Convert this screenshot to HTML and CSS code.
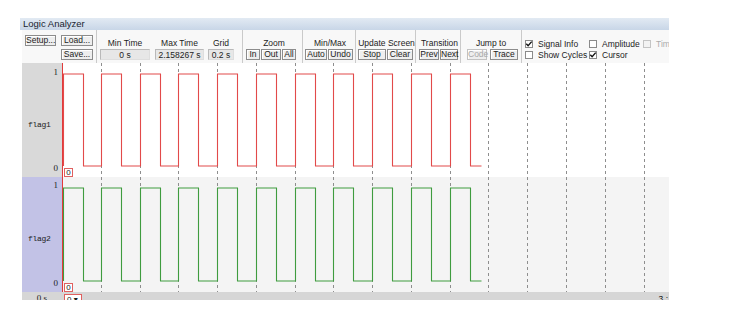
FILE: index.html
```html
<!DOCTYPE html>
<html lang="en">
<head>
    <meta charset="UTF-8">
    <title>Logic Analyzer</title>
    <link rel="stylesheet" href="styles.css">
</head>
<body>
<div class="window">
    <div class="titlebar">Logic Analyzer</div>
    <div class="frame">
        <div class="toolbar">
            <div class="grp grp-file">
                <button class="btn b-setup">Setup...</button>
                <button class="btn b-load">Load...</button>
                <button class="btn b-save">Save...</button>
            </div>
            <div class="grp grp-times">
                <div class="field f-min">
                    <span class="lbl">Min Time</span>
                    <span class="val">0 s</span>
                </div>
                <div class="field f-max">
                    <span class="lbl">Max Time</span>
                    <span class="val">2.158267 s</span>
                </div>
                <div class="field f-grid">
                    <span class="lbl">Grid</span>
                    <span class="val">0.2 s</span>
                </div>
            </div>
            <div class="grp grp-zoom">
                <span class="lbl">Zoom</span>
                <div class="btns">
                    <button class="btn w14">In</button>
                    <button class="btn w20">Out</button>
                    <button class="btn w14">All</button>
                </div>
            </div>
            <div class="grp grp-minmax">
                <span class="lbl">Min/Max</span>
                <div class="btns">
                    <button class="btn w22">Auto</button>
                    <button class="btn w25">Undo</button>
                </div>
            </div>
            <div class="grp grp-update">
                <span class="lbl">Update Screen</span>
                <div class="btns">
                    <button class="btn w28">Stop</button>
                    <button class="btn w26">Clear</button>
                </div>
            </div>
            <div class="grp grp-trans">
                <span class="lbl">Transition</span>
                <div class="btns">
                    <button class="btn w20">Prev</button>
                    <button class="btn w18">Next</button>
                </div>
            </div>
            <div class="grp grp-jump">
                <span class="lbl">Jump to</span>
                <div class="btns gap3">
                    <button class="btn w20 disabled">Code</button>
                    <button class="btn w28">Trace</button>
                </div>
            </div>
            <div class="grp grp-checks">
                <label class="chk"><span class="cb"><svg viewBox="0 0 8 8"><path d="M1.3 3.8 L3.1 5.7 L6.7 1.6"/></svg></span>Signal Info</label>
                <label class="chk"><span class="cb"></span>Amplitude</label>
                <label class="chk off"><span class="cb"></span>Timestamps</label>
                <label class="chk"><span class="cb"></span>Show Cycles</label>
                <label class="chk"><span class="cb"><svg viewBox="0 0 8 8"><path d="M1.3 3.8 L3.1 5.7 L6.7 1.6"/></svg></span>Cursor</label>
            </div>
        </div>

        <div class="plot">
            <div class="sig-label sig-1">
                <span class="lvl">1</span>
                <span class="name">flag1</span>
                <span class="lvl">0</span>
            </div>
            <div class="track track-1">
                <svg class="wave" width="606" height="114" viewBox="0 0 606 114">
                    <g class="grid">
                        <line x1="38.5" y1="0" x2="38.5" y2="114"/>
                        <line x1="77.5" y1="0" x2="77.5" y2="114"/>
                        <line x1="115.5" y1="0" x2="115.5" y2="114"/>
                        <line x1="154.5" y1="0" x2="154.5" y2="114"/>
                        <line x1="193.5" y1="0" x2="193.5" y2="114"/>
                        <line x1="232.5" y1="0" x2="232.5" y2="114"/>
                        <line x1="270.5" y1="0" x2="270.5" y2="114"/>
                        <line x1="309.5" y1="0" x2="309.5" y2="114"/>
                        <line x1="348.5" y1="0" x2="348.5" y2="114"/>
                        <line x1="387.5" y1="0" x2="387.5" y2="114"/>
                        <line x1="425.5" y1="0" x2="425.5" y2="114"/>
                        <line x1="464.5" y1="0" x2="464.5" y2="114"/>
                        <line x1="503.5" y1="0" x2="503.5" y2="114"/>
                        <line x1="542.5" y1="0" x2="542.5" y2="114"/>
                        <line x1="581.5" y1="0" x2="581.5" y2="114"/>
                    </g>
                    <path class="sig red" d="M0.5 103 V11 H20.5 V103 H38.5 V11 H58.5 V103 H77.5 V11 H97.5 V103 H115.5 V11 H135.5 V103 H154.5 V11 H174.5 V103 H193.5 V11 H213.5 V103 H232.5 V11 H252.5 V103 H270.5 V11 H290.5 V103 H309.5 V11 H329.5 V103 H348.5 V11 H368.5 V103 H387.5 V11 H407.5 V103 H418.5"/>
                </svg>
                <span class="badge">0</span>
            </div>

            <div class="sig-label sig-2">
                <span class="lvl">1</span>
                <span class="name">flag2</span>
                <span class="lvl">0</span>
            </div>
            <div class="track track-2">
                <svg class="wave" width="606" height="115" viewBox="0 0 606 115">
                    <g class="grid">
                        <line x1="38.5" y1="0" x2="38.5" y2="115"/>
                        <line x1="77.5" y1="0" x2="77.5" y2="115"/>
                        <line x1="115.5" y1="0" x2="115.5" y2="115"/>
                        <line x1="154.5" y1="0" x2="154.5" y2="115"/>
                        <line x1="193.5" y1="0" x2="193.5" y2="115"/>
                        <line x1="232.5" y1="0" x2="232.5" y2="115"/>
                        <line x1="270.5" y1="0" x2="270.5" y2="115"/>
                        <line x1="309.5" y1="0" x2="309.5" y2="115"/>
                        <line x1="348.5" y1="0" x2="348.5" y2="115"/>
                        <line x1="387.5" y1="0" x2="387.5" y2="115"/>
                        <line x1="425.5" y1="0" x2="425.5" y2="115"/>
                        <line x1="464.5" y1="0" x2="464.5" y2="115"/>
                        <line x1="503.5" y1="0" x2="503.5" y2="115"/>
                        <line x1="542.5" y1="0" x2="542.5" y2="115"/>
                        <line x1="581.5" y1="0" x2="581.5" y2="115"/>
                    </g>
                    <path class="sig green" d="M0.5 104 V11 H20.5 V104 H38.5 V11 H58.5 V104 H77.5 V11 H97.5 V104 H115.5 V11 H135.5 V104 H154.5 V11 H174.5 V104 H193.5 V11 H213.5 V104 H232.5 V11 H252.5 V104 H270.5 V11 H290.5 V104 H309.5 V11 H329.5 V104 H348.5 V11 H368.5 V104 H387.5 V11 H407.5 V104 H418.5"/>
                </svg>
                <span class="badge">0</span>
            </div>

            <div class="status-left">0 s</div>
            <div class="status-right">
                <span class="pick">0 &#9662;</span>
                <span class="endtime">3.:</span>
            </div>
        </div>
    </div>
</div>
</body>
</html>
```

FILE: styles.css
```css
body{
    margin:0;
    background:#fff;
    font-family:"Liberation Sans", "DejaVu Sans", sans-serif;
    font-size:8.5px;
    color:#1c1c1c;
}
.window{
    margin:18px 0 0 20px;
    width:649px;
    overflow:hidden;
}
.titlebar{
    height:12px;
    line-height:12px;
    padding-left:3px;
    font-size:9.5px;
    color:#1a2430;
    background:linear-gradient(#e2eaf3, #c8d6e7);
    white-space:nowrap;
}
.frame{
    padding-left:2px;
}

/* toolbar */
.toolbar{
    display:flex;
    height:33px;
    background:#f8f8f8;
    overflow:hidden;
}
.grp{
    display:flex;
    flex-direction:column;
    flex:none;
    padding-top:8px;
    border-right:1px solid #cacaca;
    box-sizing:border-box;
}
.lbl{
    display:block;
    height:10px;
    line-height:10px;
    margin-bottom:1px;
    text-align:center;
    white-space:nowrap;
}
.btns{
    display:flex;
    gap:1px;
}
.btns.gap3{
    gap:3px;
}
.btn{
    font:inherit;
    color:#1c1c1c;
    height:11px;
    line-height:9px;
    padding:0;
    margin:0;
    border:1px solid #8c8c8c;
    background:#eeeeee;
    box-shadow:inset 1px 1px 0 #ffffff;
    text-align:center;
    white-space:nowrap;
    box-sizing:border-box;
    flex:none;
}
.btn.disabled{
    color:#a9a9a9;
    border-color:#c2c2c2;
}
.w14{width:14px;}
.w18{width:18px;}
.w20{width:20px;}
.w22{width:22px;}
.w25{width:25px;}
.w26{width:26px;}
.w28{width:28px;}

.grp-file{
    width:75px;
    display:grid;
    grid-template-columns:31px 32px;
    grid-template-rows:11px 11px;
    column-gap:5px;
    row-gap:3px;
    padding:5px 0 0 3px;
}
.b-setup{grid-row:1;grid-column:1;}
.b-load{grid-row:1;grid-column:2;}
.b-save{grid-row:2;grid-column:2;}

.grp-times{
    width:146px;
    flex-direction:row;
    gap:4px;
    padding-left:3px;
}
.field{
    display:flex;
    flex-direction:column;
}
.f-min{width:50px;}
.f-max{width:49px;margin-left:1px;}
.f-grid{width:26px;}
.val{
    display:block;
    height:11px;
    line-height:10px;
    text-align:center;
    background:#e7e7e7;
    border:1px solid #b9b9b9;
    border-right-color:#dedede;
    border-bottom-color:#dedede;
    box-sizing:border-box;
    white-space:nowrap;
}

.grp-zoom{width:60px;padding-left:3px;}
.grp-minmax{width:53px;padding-left:2px;}
.grp-update{width:60px;padding-left:2px;}
.grp-trans{width:45px;padding-left:3px;}
.grp-jump{width:61px;padding-left:6px;}
.grp-jump .lbl{padding-right:6px;}

.grp-checks{
    flex:1 1 0;
    min-width:0;
    border-right:none;
    display:grid;
    grid-template-columns:64px 54px 60px;
    grid-auto-rows:11px;
    padding:8px 0 0 3px;
}
.chk{
    display:flex;
    align-items:center;
    gap:5px;
    white-space:nowrap;
}
.chk.off{
    color:#ababab;
}
.cb{
    width:8px;
    height:8px;
    border:1px solid #8a8a8a;
    background:#fff;
    flex:none;
    box-sizing:border-box;
    position:relative;
}
.chk.off .cb{
    border-color:#c4c4c4;
    background:#f3f3f3;
}
.cb svg{
    position:absolute;
    left:-1px;
    top:-1px;
    width:8px;
    height:8px;
}
.cb path{
    fill:none;
    stroke:#111;
    stroke-width:1.4;
}

/* plot */
.plot{
    display:grid;
    grid-template-columns:40px 1fr;
    grid-template-rows:114px 115px 8px;
}
.sig-label{
    display:flex;
    flex-direction:column;
    justify-content:space-between;
    padding:4px 4px 4px 6px;
}
.sig-1{background:#d9d9d9;}
.sig-2{background:#c2c2e6;padding-top:3px;}
.lvl{
    text-align:right;
    line-height:10px;
    font-family:"Liberation Serif", serif;
    font-size:9px;
}
.name{
    font-family:"Liberation Mono", monospace;
    font-size:8px;
    letter-spacing:-0.3px;
    margin-top:8px;
}
.track{
    position:relative;
    border-left:1px solid #e23b3b;
    overflow:hidden;
}
.track-1{background:#fff;}
.track-2{background:#f4f4f4;}
.wave{
    display:block;
}
.grid line{
    stroke:#8e8e8e;
    stroke-width:1;
    stroke-dasharray:3 3;
}
.sig{
    fill:none;
    stroke-width:1.1;
}
.sig.red{stroke:#e24a4a;}
.sig.green{stroke:#3f9c3f;}
.badge{
    position:absolute;
    left:1px;
    bottom:0;
    width:9px;
    height:9px;
    line-height:8px;
    text-align:center;
    border:1px solid #e06060;
    background:#fff;
    box-sizing:border-box;
    font-size:8px;
}

.status-left,
.status-right{
    background:#d6d6d6;
    overflow:hidden;
    line-height:10px;
    padding-top:1px;
}
.status-left{
    text-align:center;
    font-family:"Liberation Serif", serif;
    font-size:9px;
}
.status-right{
    display:flex;
    justify-content:space-between;
    padding-top:2px;
}
.pick{
    margin-left:2px;
    width:18px;
    height:12px;
    border:1px solid #e06060;
    background:#fff;
    box-sizing:border-box;
    padding-left:2px;
    font-size:8px;
    line-height:9px;
}
.endtime{
    margin-right:1px;
    font-size:8.5px;
}
```
